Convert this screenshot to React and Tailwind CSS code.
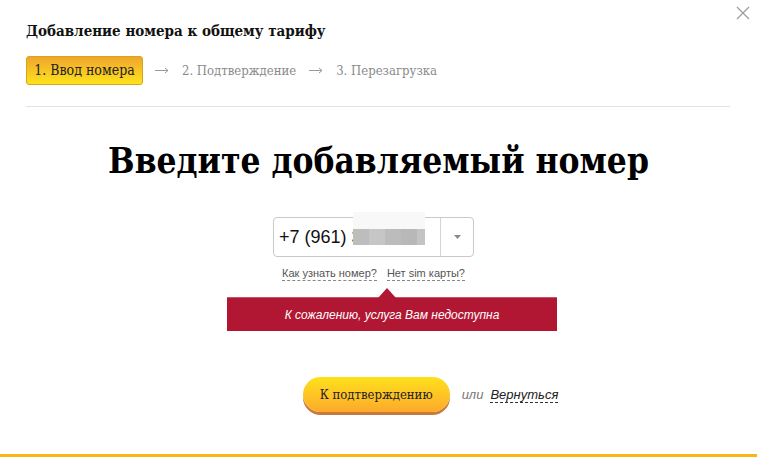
import React from "react";

const slab = { fontFamily: '"DejaVu Serif Condensed", "DejaVu Serif", serif' };

function Arrow() {
  return (
    <svg width="14" height="7" viewBox="0 0 14 7" fill="none" stroke="#9a9a9a" strokeWidth="1">
      <path d="M0 3.5 H13 M10 1 L13 3.5 L10 6" />
    </svg>
  );
}

export default function App() {
  return (
    <div className="relative w-[757px] h-[457px] bg-white overflow-hidden flex flex-col">
      <button className="absolute right-[7px] top-[6px] w-[14px] h-[14px] text-[#9a9a9a]">
        <svg viewBox="0 0 14 14" width="14" height="14" fill="none" stroke="currentColor" strokeWidth="1.2">
          <path d="M1 1 L13 13 M13 1 L1 13" />
        </svg>
      </button>

      <div className="px-[26px] pt-[20px]">
        <h1 className="text-[15px] leading-[22px] font-bold text-[#111]" style={slab}>
          Добавление номера к общему тарифу
        </h1>
        <div className="mt-[14px] flex items-center text-[13px]" style={slab}>
          <div className="h-[29px] w-[117px] flex items-center justify-center rounded-[3px] border border-[#d6a51e] bg-gradient-to-b from-[#efa52b] to-[#fde31a] text-[14px] text-[#222]">
            1. Ввод номера
          </div>
          <span className="ml-[12px]"><Arrow /></span>
          <span className="ml-[13px] text-[#8a8a8a]">2. Подтверждение</span>
          <span className="ml-[13px]"><Arrow /></span>
          <span className="ml-[13px] text-[#8a8a8a]">3. Перезагрузка</span>
        </div>
        <div className="mt-[21px] h-px bg-[#e3e3e3] w-[704px]" />
      </div>

      <div className="flex flex-col items-center">
        <h2 className="mt-[32px] text-[35px] leading-[44px] font-bold text-black" style={slab}>
          Введите добавляемый номер
        </h2>

        <div className="mt-[34px] ml-[-10px] flex h-[40px] w-[201px] rounded-[4px] border border-[#c9c9c9] relative">
          <div className="flex-1 flex items-center pl-[5px] text-[18px] text-[#111] font-['Liberation_Sans',Arial,sans-serif] overflow-hidden">
            +7 (961) 3
          </div>
          <div className="w-[33px] border-l border-[#d4d4d4] flex items-center justify-center">
            <svg width="7" height="4" viewBox="0 0 7 4"><path d="M0 0 H7 L3.5 4 Z" fill="#8a8a8a" /></svg>
          </div>
          <div className="absolute left-[79px] top-[-6px] w-[72px] flex flex-col">
            <div className="h-[17px] bg-[#f8f8f8]" />
            <div className="h-[16px] flex">
              <div className="w-[16px] bg-[#bdbdbd]" />
              <div className="w-[16px] bg-[#c6c6c6]" />
              <div className="w-[16px] bg-[#bcbcbc]" />
              <div className="w-[16px] bg-[#b8b8b8]" />
              <div className="w-[8px] bg-[#c4c4c4]" />
            </div>
          </div>
        </div>

        <div className="mt-[9px] ml-[-10px] flex gap-[10px] text-[11px] leading-[14px] text-[#555] font-['Liberation_Sans',Arial,sans-serif]">
          <span className="border-b border-dashed border-[#888]">Как узнать номер?</span>
          <span className="border-b border-dashed border-[#888]">Нет sim карты?</span>
        </div>

        <div className="relative mt-[16px] ml-[27px] w-[330px] h-[34px] bg-[#b11733] border-t border-[#c9546a] flex items-center justify-center text-white italic text-[12px] font-['Liberation_Sans',Arial,sans-serif]">
          <div className="absolute left-[151px] top-[-10px] w-0 h-0 border-l-[9px] border-r-[9px] border-b-[10px] border-l-transparent border-r-transparent border-b-[#b11733]" />
          К сожалению, услуга Вам недоступна
        </div>

        <div className="mt-[46px] ml-[104px] flex items-center">
          <button
            className="h-[35px] w-[147px] rounded-full bg-gradient-to-b from-[#fee11b] to-[#fca92a] shadow-[0_3px_0_#c77a3c] text-[13px] text-[#222]"
            style={slab}
          >
            К подтверждению
          </button>
          <span className="ml-[12px] italic text-[13px] text-[#777] font-['Liberation_Sans',Arial,sans-serif]">или</span>
          <span className="ml-[7px] italic text-[13px] text-[#222] border-b border-dashed border-[#333] leading-[15px] font-['Liberation_Sans',Arial,sans-serif]">
            Вернуться
          </span>
        </div>
      </div>

      <div className="absolute left-0 right-0 bottom-0 h-[3px] bg-[#fbb616]" />
    </div>
  );
}
